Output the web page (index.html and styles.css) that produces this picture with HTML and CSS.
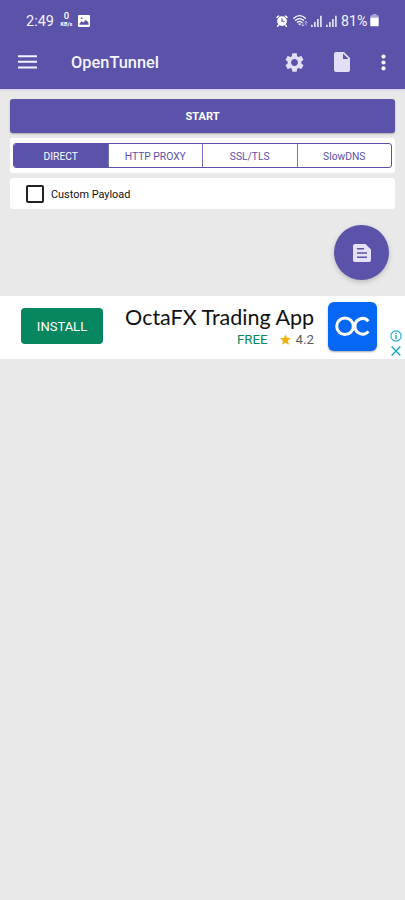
FILE: index.html
```html
<!DOCTYPE html>
<html lang="en">
<head>
<meta charset="utf-8">
<title>OpenTunnel</title>
<link rel="stylesheet" href="styles.css">
</head>
<body>
<header class="header">
  <div class="status">
    <span class="clock">2:49</span>
    <span class="speed"><b>0</b><small>KB/s</small></span>
    <svg class="photo" viewBox="0 0 12 12"><path fill="#fff" fill-rule="evenodd" d="M1 0h10q1 0 1 1v10q0 1-1 1H1q-1 0-1-1V1q0-1 1-1zM1.5 9.8h9V7.6L7.8 5 5.3 7.6 3.7 6.3 1.5 8.4zM2.8 2.5v1.6h1.6V2.5z"/></svg>
    <svg class="alarm" viewBox="0 0 12 12"><path fill="#fff" fill-rule="evenodd" d="M6 1.2a4.9 4.9 0 1 1 0 9.8 4.9 4.9 0 0 1 0-9.8zM5.4 3.2v3.5h3.2v-1H6.5V3.2z"/><path stroke="#fff" stroke-width="1.4" stroke-linecap="round" d="M1 2.4 2.6 1M11 2.4 9.4 1M2.6 10l-1 1.2M9.4 10l1 1.2"/></svg>
    <svg class="wifi" viewBox="0 0 15 13"><g fill="none" stroke="#fff" stroke-width="1.3" stroke-linecap="round"><path d="M.8 4.2q5.8-5.2 11.6 0M2.6 6.3q4-3.4 8 0M4.5 8.3q2.1-1.7 4.2 0"/></g><path fill="#fff" d="M5.2 9.8q1.4-1 2.8 0L6.6 11.5z"/><g fill="none" stroke="#fff" opacity=".55"><path d="M9.8 8v4M8.5 10.6l1.3 1.5 1.3-1.5M13 11.5v-4M11.8 8.8 13 7.5l1.3 1.3"/></g></svg>
    <svg class="signal" viewBox="0 0 11 12"><path stroke="#fff" stroke-width="1.4" d="M.9 12V9.8M3.9 12V7M6.9 12V4M9.9 12V.8"/></svg>
    <svg class="signal second" viewBox="0 0 11 12"><path stroke="#fff" stroke-width="1.4" d="M.9 12V9.8M3.9 12V7M6.9 12V4M9.9 12V.8"/></svg>
    <span class="percent">81%</span>
    <svg class="battery" viewBox="0 0 9 13"><path fill="#aaa4d8" d="M2.7 0h3.6v1.3h1.5q.9 0 .9.9V4H.3V2.2q0-.9.9-.9h1.5z"/><path fill="#fff" d="M.3 3.7h8.4v7.7q0 .9-.9.9H1.2q-.9 0-.9-.9z"/></svg>
  </div>
  <nav class="toolbar">
    <svg class="menu" viewBox="0 0 19 14"><path stroke="#f3f1ff" stroke-width="2" d="M0 1.2h19M0 6.8h19M0 12.5h19"/></svg>
    <h1>OpenTunnel</h1>
    <svg class="gear" viewBox="0 0 24 24"><path fill="#e1def5" d="M19.14 12.94c.04-.3.06-.61.06-.94 0-.32-.02-.64-.07-.94l2.03-1.58c.18-.14.23-.41.12-.61l-1.92-3.32c-.12-.22-.37-.29-.59-.22l-2.39.96c-.5-.38-1.03-.7-1.62-.94l-.36-2.54c-.04-.24-.24-.41-.48-.41h-3.84c-.24 0-.43.17-.47.41l-.36 2.54c-.59.24-1.13.57-1.62.94l-2.39-.96c-.22-.08-.47 0-.59.22L2.74 8.87c-.12.21-.08.47.12.61l2.03 1.58c-.05.3-.09.63-.09.94s.02.64.07.94l-2.03 1.58c-.18.14-.23.41-.12.61l1.92 3.32c.12.22.37.29.59.22l2.39-.96c.5.38 1.03.7 1.62.94l.36 2.54c.05.24.24.41.48.41h3.84c.24 0 .44-.17.47-.41l.36-2.54c.59-.24 1.13-.56 1.62-.94l2.39.96c.22.08.47 0 .59-.22l1.92-3.32c.12-.22.07-.47-.12-.61zM12 15.6c-1.98 0-3.6-1.62-3.6-3.6s1.62-3.6 3.6-3.6 3.6 1.62 3.6 3.6-1.62 3.6-3.6 3.6z"/></svg>
    <svg class="file" viewBox="4 2 16 20"><path fill="#e1def5" d="M6 2c-1.1 0-2 .9-2 2v16c0 1.1.9 2 2 2h12c1.1 0 2-.9 2-2V8l-6-6H6zm7 7V3.5L18.5 9H13z"/></svg>
    <svg class="dots" viewBox="0 0 5 17"><g fill="#f5f3ff"><circle cx="2.5" cy="2.6" r="2.1"/><circle cx="2.5" cy="8.5" r="2.1"/><circle cx="2.5" cy="14.4" r="2.1"/></g></svg>
  </nav>
</header>
<main>
  <button class="start">START</button>
  <section class="card tabs-card">
    <div class="tabs">
      <span class="tab active">DIRECT</span>
      <span class="tab">HTTP PROXY</span>
      <span class="tab">SSL/TLS</span>
      <span class="tab">SlowDNS</span>
    </div>
  </section>
  <label class="card payload"><span class="box"></span><span class="label">Custom Payload</span></label>
  <button class="fab"><svg viewBox="0 0 18 18"><path fill="#e5e1fa" fill-rule="evenodd" d="M2 0h10.5L18 5.5V16q0 2-2 2H2q-2 0-2-2V2Q0 0 2 0zM4 4v1.6h7V4zM4 8.2v1.6h10V8.2zM4 12.4V14h10v-1.6z"/></svg></button>
</main>
<aside class="ad">
  <span class="install">INSTALL</span>
  <div class="info">
    <div class="name">OctaFX Trading App</div>
    <div class="meta"><span class="free">FREE</span><svg class="star" viewBox="2 2 20 19"><path fill="#f4b30c" d="M12 17.27 18.18 21l-1.64-7.03L22 9.24l-7.19-.61L12 2 9.19 8.63 2 9.24l5.46 4.73L5.82 21z"/></svg><span class="rating">4.2</span></div>
  </div>
  <div class="logo"><svg viewBox="0 0 49 49"><g fill="none" stroke="#fff" stroke-width="3"><circle cx="17" cy="24.3" r="8.3"/><path d="M40.4 19.2A7.6 7.6 0 0 0 27 24.3 7.6 7.6 0 0 0 40.4 29.4"/></g></svg></div>
  <div class="choices">
    <svg viewBox="0 0 12 12"><circle cx="6" cy="6" r="5.1" fill="none" stroke="#18a9cf" stroke-width="1.1"/><path stroke="#18a9cf" stroke-width="1.4" d="M6 5v4M6 2.7v1.4"/></svg>
    <svg viewBox="0 0 12 12"><path stroke="#18a9cf" stroke-width="1.4" d="m1.6 1.6 8.8 8.8M10.4 1.6l-8.8 8.8"/></svg>
  </div>
</aside>
</body>
</html>
```
FILE: styles.css
```css
* { box-sizing: border-box; }
body { margin: 0; height: 900px; background: #e9e9e9; font-family: Roboto, sans-serif; overflow: hidden; }
svg { display: block; flex: none; }
span, h1, .name { white-space: nowrap; }
button { border: 0; padding: 0; font-family: inherit; }
.header { height: 89px; background: #5a53a9; color: #fff; box-shadow: 0 1px 3px #cfcbed; }
.status { height: 41px; display: flex; align-items: center; padding-left: 26px; }
.clock { width: 33px; padding-top: 1px; font-size: 14.5px; color: #f3f1ff; }
.speed { width: 15px; display: flex; flex-direction: column; align-items: center; }
.speed b { font-size: 9.5px; line-height: 10px; font-weight: 500; margin-top: -2px; }
.speed small { font-size: 5.5px; line-height: 7px; font-weight: 700; }
.photo { width: 12px; height: 12px; margin-left: 4px; }
.alarm { width: 12px; height: 12px; margin-left: 186px; }
.wifi { width: 15px; height: 13px; margin-left: 5px; }
.signal { width: 11px; height: 12px; margin-left: 3px; }
.second { margin-left: 4px; }
.percent { width: 28px; margin-left: 4px; padding-top: 1px; font-size: 14.2px; color: #f3f1ff; }
.battery { width: 9px; height: 13px; margin-left: 1px; }
.toolbar { height: 42px; display: flex; align-items: center; padding-left: 18px; }
.menu { width: 19px; height: 14px; }
h1 { width: 212px; margin: 2px 0 0 34px; font-size: 16.4px; line-height: 20px; font-weight: 500; color: #f5f3ff; }
.gear { width: 23px; height: 23px; }
.file { width: 16px; height: 20px; margin-left: 28px; }
.dots { width: 5px; height: 17px; margin-left: 31px; }
main { height: 207px; padding: 10px 10px 0; display: flex; flex-direction: column; }
.start { height: 34px; flex: none; padding-top: 1px; border-radius: 3px; background: #5a53a9; color: #fff; font-size: 11px; font-weight: 700; box-shadow: 0 1px 2px #aaa; }
.card { background: #fff; border-radius: 3px; }
.tabs-card { height: 35px; margin-top: 5px; padding: 5px 3px; }
.tabs { height: 25px; display: flex; border: 1px solid #5a53a9; border-radius: 3px; overflow: hidden; }
.tab { flex: 1; display: flex; align-items: center; justify-content: center; padding-top: 1px; border-left: 1px solid #7771b5; color: #5a53a9; font-size: 10.3px; }
.tab:first-child { border-left: 0; }
.active { background: #5a53a9; color: #fff; }
.payload { height: 31px; margin-top: 5px; display: flex; align-items: center; padding-left: 16px; font-size: 10.9px; color: #111; }
.label { padding-top: 1px; }
.box { width: 18px; height: 18px; border: 2px solid #222; border-radius: 2px; margin-right: 7px; }
.fab { width: 55px; height: 55px; margin: 16px 6px 0 auto; border-radius: 50%; background: #5a53a9; display: flex; align-items: center; justify-content: center; box-shadow: 0 2px 5px #bbb; }
.fab svg { width: 18px; height: 18px; }
.ad { height: 63px; background: #fff; display: flex; align-items: center; padding-left: 21px; }
.install { width: 82px; height: 36px; margin-top: -3px; border-radius: 4px; background: #078760; color: #fff; display: flex; align-items: center; justify-content: center; font-size: 13px; }
.info { width: 211px; display: flex; flex-direction: column; align-items: flex-end; }
.name { font-family: Lato, sans-serif; font-size: 21.5px; line-height: 25px; margin-top: -1px; color: #111; }
.meta { height: 20px; display: flex; align-items: center; font-size: 13.3px; color: #5c5c5c; }
.free { color: #078760; margin-right: 12px; }
.star { width: 11px; height: 11px; margin-right: 5px; }
.logo { width: 49px; height: 49px; margin: -2px 0 0 14px; border-radius: 6px; background: #0667f5; box-shadow: 0 1px 2px #aaa; }
.choices { margin: 32px 0 0 13px; display: flex; flex-direction: column; gap: 3px; }
.choices svg { width: 12px; height: 12px; }
```
